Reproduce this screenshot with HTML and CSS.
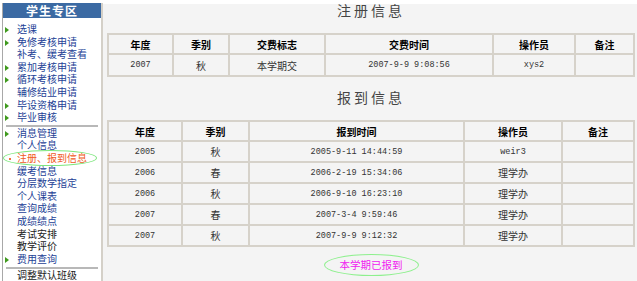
FILE: index.html
```html
<!DOCTYPE html>
<html lang="zh-CN">
<head>
    <meta charset="UTF-8">
    <title>学生专区 - 注册、报到信息</title>
    <link rel="stylesheet" href="styles.css">
</head>
<body>
    <div class="sidebar">
        <div class="side-title">学生专区</div>
        <ul class="menu">
            <li class="arrow">选课</li>
            <li class="arrow">免修考核申请</li>
            <li>补考、缓考查看</li>
            <li class="arrow">累加考核申请</li>
            <li class="arrow">循环考核申请</li>
            <li>辅修结业申请</li>
            <li class="arrow">毕设资格申请</li>
            <li class="arrow">毕业审核</li>
        </ul>
        <div class="sep"></div>
        <ul class="menu">
            <li class="arrow">消息管理</li>
            <li>个人信息</li>
            <li class="current">注册、报到信息</li>
            <li>缓考信息</li>
            <li>分层数学指定</li>
            <li>个人课表</li>
            <li>查询成绩</li>
            <li>成绩绩点</li>
            <li class="plain">考试安排</li>
            <li class="plain">教学评价</li>
            <li class="arrow">费用查询</li>
        </ul>
        <div class="sep sep-low"></div>
        <ul class="menu">
            <li class="plain">调整默认班级</li>
        </ul>
    </div>

    <div class="content">
        <h2 class="section-title">注册信息</h2>
        <table class="info">
            <colgroup>
                <col class="r-year">
                <col class="r-term">
                <col class="r-flag">
                <col class="r-time">
                <col class="r-op">
                <col class="r-note">
            </colgroup>
            <tr>
                <th>年度</th>
                <th>季别</th>
                <th>交费标志</th>
                <th>交费时间</th>
                <th>操作员</th>
                <th>备注</th>
            </tr>
            <tr class="tall">
                <td class="num">2007</td>
                <td>秋</td>
                <td>本学期交</td>
                <td class="num">2007-9-9 9:08:56</td>
                <td class="num">xys2</td>
                <td></td>
            </tr>
        </table>

        <h2 class="section-title second">报到信息</h2>
        <table class="info">
            <colgroup>
                <col class="b-year">
                <col class="b-term">
                <col class="b-time">
                <col class="b-op">
                <col class="b-note">
            </colgroup>
            <tr>
                <th>年度</th>
                <th>季别</th>
                <th>报到时间</th>
                <th>操作员</th>
                <th>备注</th>
            </tr>
            <tr>
                <td class="num">2005</td>
                <td>秋</td>
                <td class="num">2005-9-11 14:44:59</td>
                <td class="num">weir3</td>
                <td></td>
            </tr>
            <tr>
                <td class="num">2006</td>
                <td>春</td>
                <td class="num">2006-2-19 15:34:06</td>
                <td>理学办</td>
                <td></td>
            </tr>
            <tr>
                <td class="num">2006</td>
                <td>秋</td>
                <td class="num">2006-9-10 16:23:10</td>
                <td>理学办</td>
                <td></td>
            </tr>
            <tr>
                <td class="num">2007</td>
                <td>春</td>
                <td class="num">2007-3-4 9:59:46</td>
                <td>理学办</td>
                <td></td>
            </tr>
            <tr>
                <td class="num">2007</td>
                <td>秋</td>
                <td class="num">2007-9-9 9:12:32</td>
                <td>理学办</td>
                <td></td>
            </tr>
        </table>

        <div class="notice">
            <span class="notice-text">本学期已报到</span>
        </div>
    </div>
</body>
</html>
```

FILE: styles.css
```css
body {
    margin: 0;
    display: flex;
    align-items: flex-start;
    background-color: #ffffff;
    font-family: "Noto Sans CJK SC", "Liberation Sans", sans-serif;
    height: 281px;
    overflow: hidden;
}

/* left menu */
.sidebar {
    width: 98px;
    margin: 3px 0 0 2px;
    border-left: 1px solid #a8a8a8;
    border-right: 2px solid #d4d0c8;
    height: 290px;
    flex-shrink: 0;
}

.side-title {
    height: 15px;
    line-height: 15px;
    background-color: #3b6aa3;
    color: #ffffff;
    font-size: 12px;
    font-weight: bold;
    text-align: center;
    letter-spacing: 1px;
}

.menu {
    list-style: none;
    margin: 5px 0 0;
    padding: 0;
}

.sep + .menu {
    margin-top: 0;
}

.menu li {
    position: relative;
    padding-left: 14px;
    font-size: 10px;
    line-height: 12.6px;
    height: 12.6px;
    color: #1d3f96;
    white-space: nowrap;
}

.menu li.arrow::before {
    content: "";
    display: inline-block;
    margin-left: -12px;
    margin-right: 8px;
    border-left: 4px solid #3f9a1d;
    border-top: 3px solid transparent;
    border-bottom: 3px solid transparent;
    vertical-align: 0;
}

.menu li.plain {
    color: #222222;
}

.menu li.current {
    color: #f05a24;
}

.menu li.current::before {
    content: "";
    display: inline-block;
    width: 2px;
    height: 2px;
    margin-left: -8px;
    margin-right: 6px;
    background-color: #f07040;
    vertical-align: 2px;
}

.menu li.current::after {
    content: "";
    position: absolute;
    left: 0;
    right: 4px;
    top: -2px;
    bottom: -1px;
    border: 1px solid #7fe67f;
    border-radius: 50%;
}

.sep {
    height: 2px;
    margin: 1px 3px 0;
    background-color: #b8b8b8;
}

.sep-low {
    margin-top: 2px;
}

/* main area */
.content {
    flex: 1;
    margin: 4px 1px 0 0;
    padding: 0 3px 0 4px;
    background-color: #f4f4f4;
    height: 290px;
}

.section-title {
    margin: -1px 0 16px;
    font-size: 14px;
    line-height: 14px;
    font-weight: normal;
    letter-spacing: 3px;
    color: #444444;
    text-align: center;
}

.section-title.second {
    margin-top: 13px;
}

.info {
    width: 100%;
    table-layout: fixed;
    border-collapse: separate;
    border-spacing: 0;
    border: 1px solid #d6d2ca;
}

.info th,
.info td {
    border: 1px solid #d6d2ca;
    padding: 0;
    text-align: center;
    font-size: 10px;
    white-space: nowrap;
}

.info th {
    height: 18px;
    font-weight: bold;
    color: #000000;
}

.info td {
    height: 19px;
    color: #333333;
}

.info tr.tall td {
    height: 20px;
}

.info td.num {
    font-family: "Liberation Mono", monospace;
    font-size: 8.5px;
}

.r-year { width: 65px; }
.r-term { width: 56px; }
.r-flag { width: 96px; }
.r-time { width: 168px; }
.r-op { width: 82px; }
.r-note { width: 59px; }

.b-year { width: 74px; }
.b-term { width: 67px; }
.b-time { width: 215px; }
.b-op { width: 98px; }
.b-note { width: 72px; }

.notice {
    display: flex;
    justify-content: center;
    margin-top: 7px;
}

.notice-text {
    width: 93px;
    height: 20px;
    line-height: 20px;
    border: 1px solid #8ef08e;
    border-radius: 50%;
    color: #f020f0;
    font-size: 10.5px;
    text-align: center;
}
```
